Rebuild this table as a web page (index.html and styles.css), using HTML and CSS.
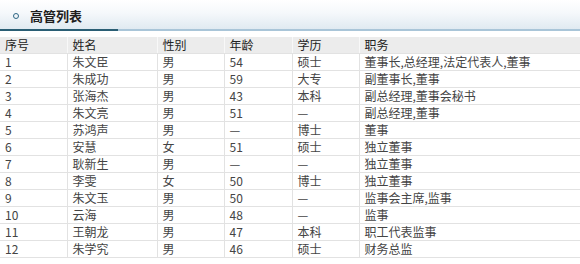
FILE: index.html
```html
<!DOCTYPE html>
<html lang="zh">
<head>
<meta charset="utf-8">
<link rel="stylesheet" href="styles.css">
</head>
<body>
<div class="panel">
  <div class="title-bar">
    <span class="ring"></span>
    <span class="title">高管列表</span>
  </div>
  <div class="rule"><span class="rule-dark"></span></div>
  <table class="grid">
    <colgroup>
      <col class="c1"><col class="c2"><col class="c3"><col class="c4"><col class="c5"><col class="c6">
    </colgroup>
    <thead>
      <tr><th>序号</th><th>姓名</th><th>性别</th><th>年龄</th><th>学历</th><th>职务</th></tr>
    </thead>
    <tbody>
      <tr><td>1</td><td>朱文臣</td><td>男</td><td>54</td><td>硕士</td><td>董事长,总经理,法定代表人,董事</td></tr>
      <tr><td>2</td><td>朱成功</td><td>男</td><td>59</td><td>大专</td><td>副董事长,董事</td></tr>
      <tr><td>3</td><td>张海杰</td><td>男</td><td>43</td><td>本科</td><td>副总经理,董事会秘书</td></tr>
      <tr><td>4</td><td>朱文亮</td><td>男</td><td>51</td><td>—</td><td>副总经理,董事</td></tr>
      <tr><td>5</td><td>苏鸿声</td><td>男</td><td>—</td><td>博士</td><td>董事</td></tr>
      <tr><td>6</td><td>安慧</td><td>女</td><td>51</td><td>硕士</td><td>独立董事</td></tr>
      <tr><td>7</td><td>耿新生</td><td>男</td><td>—</td><td>—</td><td>独立董事</td></tr>
      <tr><td>8</td><td>李雯</td><td>女</td><td>50</td><td>博士</td><td>独立董事</td></tr>
      <tr><td>9</td><td>朱文玉</td><td>男</td><td>50</td><td>—</td><td>监事会主席,监事</td></tr>
      <tr><td>10</td><td>云海</td><td>男</td><td>48</td><td>—</td><td>监事</td></tr>
      <tr><td>11</td><td>王朝龙</td><td>男</td><td>47</td><td>本科</td><td>职工代表监事</td></tr>
      <tr><td>12</td><td>朱学究</td><td>男</td><td>46</td><td>硕士</td><td>财务总监</td></tr>
    </tbody>
  </table>
</div>
</body>
</html>
```
FILE: styles.css
```css
html, body {
  margin: 0;
  padding: 0;
  background: #ffffff;
}
.panel {
  width: 580px;
  font-family: "Noto Sans CJK SC", "Liberation Sans", sans-serif;
  color: #333333;
}
.title-bar {
  height: 29px;
  display: flex;
  align-items: center;
  padding-left: 13px;
  gap: 11px;
  background: linear-gradient(to bottom, #ffffff 0%, #f5f8fb 45%, #e0eaf1 100%);
}
.ring {
  width: 4px;
  height: 4px;
  border: 1.6px solid #2d6684;
  border-radius: 50%;
  margin-top: 2px;
}
.title {
  font-size: 13px;
  font-weight: bold;
  color: #1e1e1e;
  line-height: 29px;
  padding-top: 2px;
}
.rule {
  height: 2px;
  background: #a9c5d8;
  display: flex;
}
.rule-dark {
  width: 118px;
  height: 2px;
  background: #2a5e74;
}
.grid {
  margin-top: 6px;
  width: 580px;
  border-collapse: collapse;
  table-layout: fixed;
  font-size: 12px;
}
.c1 { width: 67px; }
.c2 { width: 90px; }
.c3 { width: 67px; }
.c4 { width: 68px; }
.c5 { width: 67px; }
.c6 { width: auto; }
.grid th, .grid td {
  text-align: left;
  padding: 0 0 0 5px;
  height: 16px;
  line-height: 16px;
  white-space: nowrap;
  border-bottom: 1px solid #e2e2e2;
  border-left: 1px solid #e2e2e2;
  overflow: hidden;
}
.grid th:first-child, .grid td:first-child {
  border-left: none;
}
.grid th {
  background: #ececec;
  font-weight: normal;
  color: #222222;
  border-left-color: #f8f8f8;
}
.grid td {
  color: #444444;
}
```
